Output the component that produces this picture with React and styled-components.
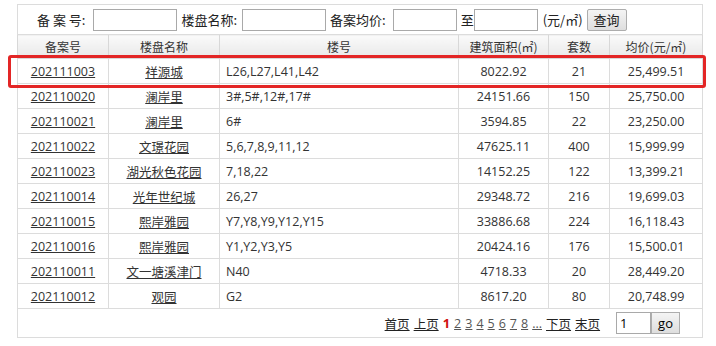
import React from "react";
import styled, { createGlobalStyle } from "styled-components";

const GlobalStyle = createGlobalStyle`
  body {
    margin: 0;
    background: #fff;
    font-family: "Open Sans", "Noto Sans CJK SC", sans-serif;
    font-size: 12px;
    color: #333;
  }
`;

const Page = styled.div`
  position: relative;
  width: 716px;
  height: 346px;
  padding: 4px 0 0 17px;
  box-sizing: border-box;
`;

const Grid = styled.table`
  border-collapse: collapse;
  width: 685px;
  table-layout: fixed;
  border: 1px solid #dcdcdc;
`;

const SearchCell = styled.td`
  height: 29px;
  padding: 0 0 0 19px;
  border-bottom: 1px solid #dcdcdc;
`;

const SearchBar = styled.div`
  display: flex;
  align-items: center;
  white-space: nowrap;
`;

const Label = styled.span`
  font-family: "Noto Sans CJK SC", sans-serif;
  font-size: 13px;
  color: #222;
  margin-right: ${(p) => p.$gap ?? 5}px;
`;

const Field = styled.input`
  width: ${(p) => p.$w}px;
  height: 22px;
  box-sizing: border-box;
  border: 1px solid #a9a9a9;
  padding: 0 3px;
  margin-right: ${(p) => p.$gap ?? 4}px;
  font-size: 12px;
  font-family: inherit;
`;

const Button = styled.button`
  height: 22px;
  padding: 0 6px;
  border: 1px solid #adadad;
  border-radius: 2px;
  background: linear-gradient(#f4f4f4, #dedede);
  font-family: "Noto Sans CJK SC", sans-serif;
  font-size: 13px;
  color: #222;
  margin-left: ${(p) => p.$gap || 0}px;
`;

const Th = styled.th`
  height: 23px;
  padding: 0;
  font-family: "Noto Sans CJK SC", sans-serif;
  font-weight: normal;
  font-size: 12px;
  color: #333;
  background: linear-gradient(#fafafa, #e8e8e8);
  border: 1px solid #d8d8d8;
  border-top: none;
`;

const Td = styled.td`
  height: 24px;
  padding: ${(p) => (p.$left ? "0 0 0 6px" : "0")};
  text-align: ${(p) => (p.$left ? "left" : "center")};
  border: 1px solid #dcdcdc;
  font-size: 12.5px;
  white-space: nowrap;
`;

const Link = styled.a`
  color: #333;
  text-decoration: underline;
  font-family: ${(p) => (p.$cjk ? '"Noto Sans CJK SC", sans-serif' : "inherit")};
`;

const PagerCell = styled.td`
  height: 28px;
  padding: 0 22px 0 0;
  text-align: right;
`;

const Pager = styled.div`
  display: flex;
  justify-content: flex-end;
  align-items: center;
  gap: 4px;
  white-space: nowrap;
`;

const PageLink = styled.a`
  color: ${(p) => (p.$nav ? "#222" : "#555")};
  text-decoration: underline;
  font-family: ${(p) => (p.$nav ? '"Noto Sans CJK SC", sans-serif' : "inherit")};
  font-size: 12.5px;
`;

const Current = styled.span`
  color: #d01010;
  font-weight: bold;
  font-size: 13px;
`;

const GoBox = styled.div`
  display: flex;
  margin-left: 12px;
`;

const GoInput = styled.input`
  width: 35px;
  height: 22px;
  box-sizing: border-box;
  border: 1px solid #a9a9a9;
  padding: 0 3px;
  font-size: 13px;
  font-family: inherit;
`;

const GoButton = styled.button`
  width: 29px;
  height: 22px;
  border: 1px solid #adadad;
  background: linear-gradient(#f4f4f4, #dedede);
  font-size: 13px;
  font-family: inherit;
  padding: 0;
`;

const Highlight = styled.div`
  position: absolute;
  left: 8px;
  top: 55px;
  width: 698px;
  height: 33px;
  box-sizing: border-box;
  border: 3px solid #e32626;
  border-radius: 3px;
  pointer-events: none;
`;

const rows = [
  ["202111003", "祥源城", "L26,L27,L41,L42", "8022.92", "21", "25,499.51"],
  ["202110020", "澜岸里", "3#,5#,12#,17#", "24151.66", "150", "25,750.00"],
  ["202110021", "澜岸里", "6#", "3594.85", "22", "23,250.00"],
  ["202110022", "文璟花园", "5,6,7,8,9,11,12", "47625.11", "400", "15,999.99"],
  ["202110023", "湖光秋色花园", "7,18,22", "14152.25", "122", "13,399.21"],
  ["202110014", "光年世纪城", "26,27", "29348.72", "216", "19,699.03"],
  ["202110015", "熙岸雅园", "Y7,Y8,Y9,Y12,Y15", "33886.68", "224", "16,118.43"],
  ["202110016", "熙岸雅园", "Y1,Y2,Y3,Y5", "20424.16", "176", "15,500.01"],
  ["202110011", "文一塘溪津门", "N40", "4718.33", "20", "28,449.20"],
  ["202110012", "观园", "G2", "8617.20", "80", "20,748.99"],
];

const widths = [91, 111, 239, 90, 61, 93];

export default function App() {
  return (
    <Page>
      <GlobalStyle />
      <Grid>
        <colgroup>
          {widths.map((w, i) => (
            <col key={i} style={{ width: w }} />
          ))}
        </colgroup>
        <tbody>
          <tr>
            <SearchCell colSpan={6}>
              <SearchBar>
                <Label $gap={8}>备&nbsp;案&nbsp;号:</Label>
                <Field $w={84} />
                <Label>楼盘名称:</Label>
                <Field $w={84} />
                <Label $gap={7}>备案均价:</Label>
                <Field $w={64} />
                <Label $gap={0}>至</Label>
                <Field $w={64} $gap={5} />
                <Label $gap={0}>(元/㎡)</Label>
                <Button $gap={4}>查询</Button>
              </SearchBar>
            </SearchCell>
          </tr>
          <tr>
            <Th>备案号</Th>
            <Th>楼盘名称</Th>
            <Th>楼号</Th>
            <Th>建筑面积(㎡)</Th>
            <Th>套数</Th>
            <Th>均价(元/㎡)</Th>
          </tr>
          {rows.map((r) => (
            <tr key={r[0] + r[2]}>
              <Td>
                <Link href="#">{r[0]}</Link>
              </Td>
              <Td>
                <Link href="#" $cjk>
                  {r[1]}
                </Link>
              </Td>
              <Td $left>{r[2]}</Td>
              <Td>{r[3]}</Td>
              <Td>{r[4]}</Td>
              <Td>{r[5]}</Td>
            </tr>
          ))}
          <tr>
            <PagerCell colSpan={6}>
              <Pager>
                <PageLink $nav href="#">首页</PageLink>
                <PageLink $nav href="#">上页</PageLink>
                <Current>1</Current>
                {["2", "3", "4", "5", "6", "7", "8", "..."].map((n) => (
                  <PageLink key={n} href="#">
                    {n}
                  </PageLink>
                ))}
                <PageLink $nav href="#">下页</PageLink>
                <PageLink $nav href="#">末页</PageLink>
                <GoBox>
                  <GoInput defaultValue="1" />
                  <GoButton>go</GoButton>
                </GoBox>
              </Pager>
            </PagerCell>
          </tr>
        </tbody>
      </Grid>
      <Highlight />
    </Page>
  );
}
